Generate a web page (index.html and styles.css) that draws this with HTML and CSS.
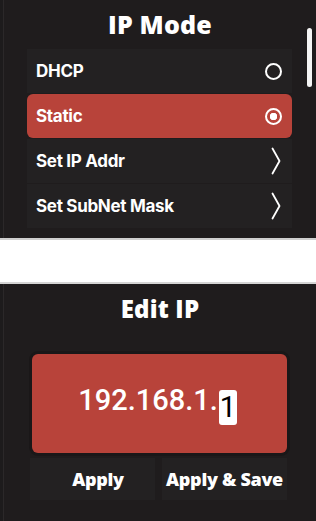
FILE: index.html
```html
<!DOCTYPE html>
<html lang="en">
<head>
    <meta charset="UTF-8">
    <meta name="viewport" content="width=device-width, initial-scale=1.0">
    <title>IP Mode</title>
    <link rel="stylesheet" href="styles.css">
</head>
<body>
    <div class="panel mode-panel">
        <div class="title">IP Mode</div>
        <div class="menu">
            <div class="row">
                <span>DHCP</span>
                <span class="radio"></span>
            </div>
            <div class="row selected">
                <span>Static</span>
                <span class="radio checked"></span>
            </div>
            <div class="row">
                <span>Set IP Addr</span>
                <svg class="chevron" width="10" height="28" viewBox="0 0 10 28">
                    <path d="M1.5 1.5 L8.5 14 L1.5 26.5" fill="none" stroke="#fff" stroke-width="1.8" stroke-linecap="round" stroke-linejoin="round"/>
                </svg>
            </div>
            <div class="row">
                <span>Set SubNet Mask</span>
                <svg class="chevron" width="10" height="28" viewBox="0 0 10 28">
                    <path d="M1.5 1.5 L8.5 14 L1.5 26.5" fill="none" stroke="#fff" stroke-width="1.8" stroke-linecap="round" stroke-linejoin="round"/>
                </svg>
            </div>
        </div>
        <div class="scrollbar"></div>
    </div>

    <div class="spacer"></div>

    <div class="panel edit-panel">
        <div class="title">Edit IP</div>
        <div class="ip-box">
            <span class="ip-text">192.168.1.<span class="cursor">1</span></span>
        </div>
        <div class="actions">
            <button class="action-btn apply">Apply</button>
            <button class="action-btn">Apply &amp; Save</button>
        </div>
    </div>
</body>
</html>
```

FILE: styles.css
```css
* {
    margin: 0;
    padding: 0;
    box-sizing: border-box;
}

body {
    width: 316px;
    height: 521px;
    background: #fff;
    font-family: Inter, "Liberation Sans", sans-serif;
    color: #fff;
    overflow: hidden;
}

.panel {
    position: relative;
    background: #1f1c1d;
    border-left: 1px solid #2b2829;
    margin-left: 3px;
    box-shadow: -3px 0 0 #1d1b1c;
}

.mode-panel {
    height: 238px;
}

.title {
    height: 49px;
    line-height: 48px;
    text-align: center;
    font-family: "Open Sans", sans-serif;
    font-weight: 800;
    font-size: 25px;
    letter-spacing: 0.2px;
}

.edit-panel .title {
    height: 50px;
    font-size: 24px;
}

.menu {
    width: 265px;
    margin-left: 23px;
    display: flex;
    flex-direction: column;
    gap: 1px;
}

.row {
    height: 44px;
    display: flex;
    align-items: center;
    justify-content: space-between;
    padding: 0 10px 0 9px;
    background: #232122;
    font-size: 17px;
    font-weight: 700;
    letter-spacing: -0.3px;
}

.row.selected {
    background: #b8433a;
    border-radius: 6px;
}

.radio {
    width: 17px;
    height: 17px;
    border: 2.5px solid #fff;
    border-radius: 50%;
}

.radio.checked {
    background: radial-gradient(circle, #fff 0 3.5px, transparent 4px);
}

.chevron {
    margin-right: 1px;
}

.scrollbar {
    position: absolute;
    top: 28px;
    right: 4px;
    width: 5px;
    height: 59px;
    background: #f4f4f4;
    border-radius: 3px;
}

.spacer {
    height: 46px;
    border-top: 2px solid #cfcfcf;
    border-bottom: 2px solid #d4d4d4;
}

.edit-panel {
    height: 237px;
    padding-top: 1px;
}

.ip-box {
    width: 255px;
    height: 99px;
    margin: 19px 0 0 28px;
    background: #b8433a;
    border-radius: 6px;
    box-shadow: 0 0 0 3px #1a1718;
    display: flex;
    align-items: center;
    justify-content: center;
}

.ip-text {
    font-family: Roboto, sans-serif;
    font-size: 29px;
    font-weight: 500;
    letter-spacing: 0;
    padding-right: 4px;
}

.cursor {
    display: inline-block;
    background: #fff;
    color: #000;
    border-radius: 3px;
    width: 18px;
    height: 35px;
    line-height: 35px;
    text-align: center;
    font-weight: 400;
    vertical-align: -7px;
    margin-left: 1px;
}

.actions {
    display: flex;
    gap: 7px;
    margin: 5px 0 0 26px;
}

.action-btn {
    width: 125px;
    height: 42px;
    background: #232122;
    border: none;
    color: #fff;
    font-family: "Open Sans", sans-serif;
    font-weight: 800;
    font-size: 18px;
    letter-spacing: -0.3px;
}

.action-btn.apply {
    padding-left: 11px;
}
```
